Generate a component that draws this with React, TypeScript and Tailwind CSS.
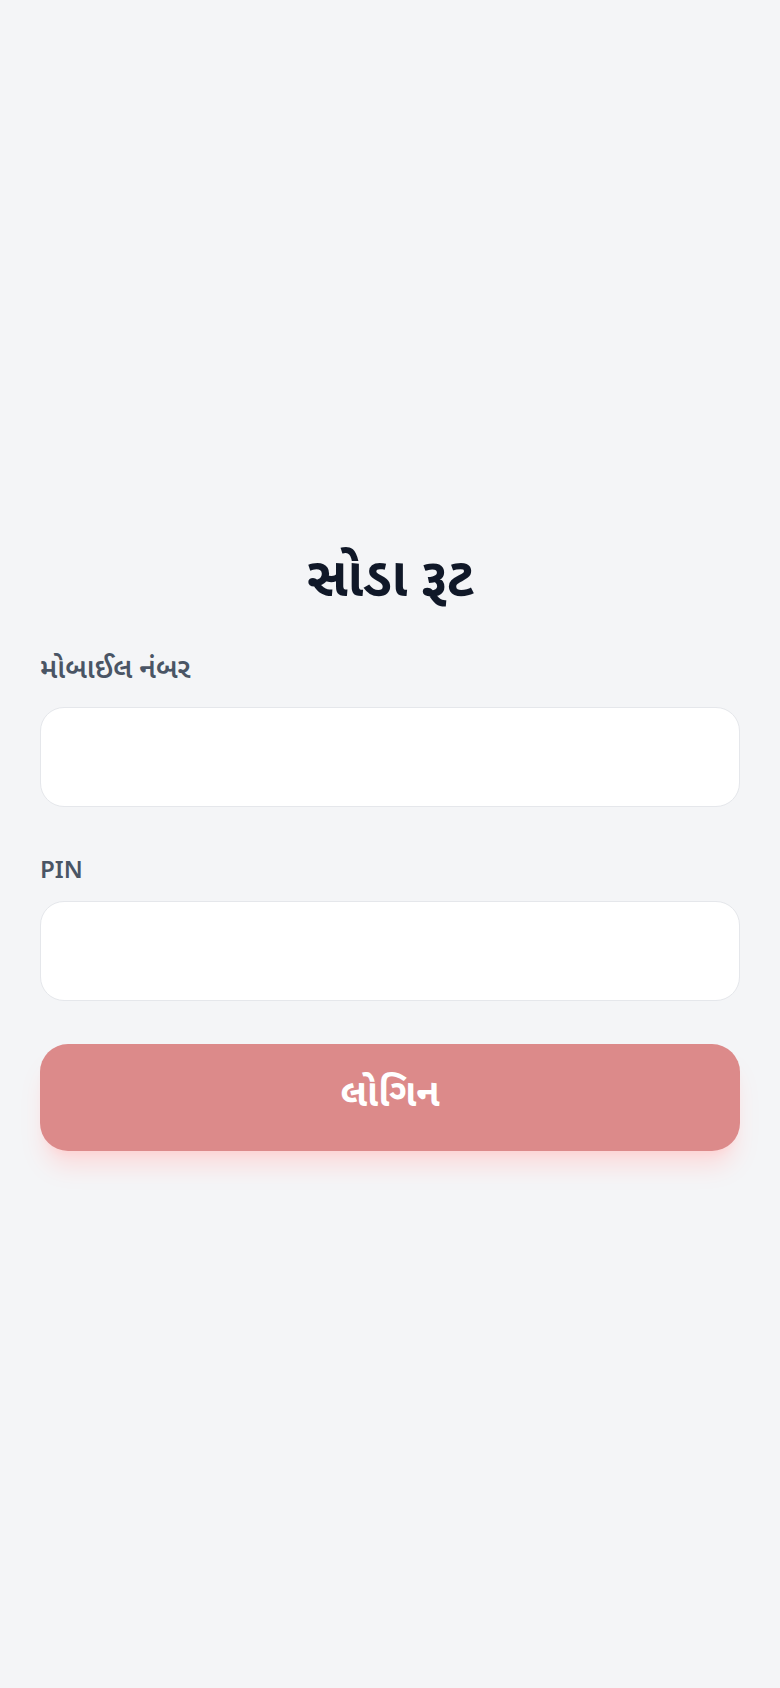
import React from 'react';

const App: React.FC = () => {
  return (
    <div
      className="min-h-screen bg-[#f4f5f7] flex items-center justify-center px-10 pt-[9px]"
      style={{ fontFamily: '"Noto Sans Gujarati", "Noto Sans", sans-serif' }}
    >
      <div className="w-full">
        <h1 className="text-center text-[54px] leading-[64px] font-bold text-gray-900 mt-[5px] mb-[38px]">સોડા રૂટ</h1>

        <form onSubmit={(e) => e.preventDefault()}>
          <label className="block text-[28px] leading-9 font-semibold text-gray-600 mb-[18px]">મોબાઈલ નંબર</label>
          <input
            type="tel"
            className="block w-full h-[100px] rounded-3xl bg-white border border-gray-200 px-6 text-2xl outline-none"
          />

          <label className="block text-2xl leading-9 font-semibold text-gray-600 mt-[47px] mb-[11px]">PIN</label>
          <input
            type="password"
            className="block w-full h-[100px] rounded-3xl bg-white border border-gray-200 px-6 text-2xl outline-none"
          />

          <button
            type="submit"
            className="mt-[43px] w-full h-[107px] rounded-[28px] bg-[#dc8a8a] text-white text-[38px] font-bold shadow-xl shadow-red-200/60"
          >
            લોગિન
          </button>
        </form>
      </div>
    </div>
  );
};

export default App;
